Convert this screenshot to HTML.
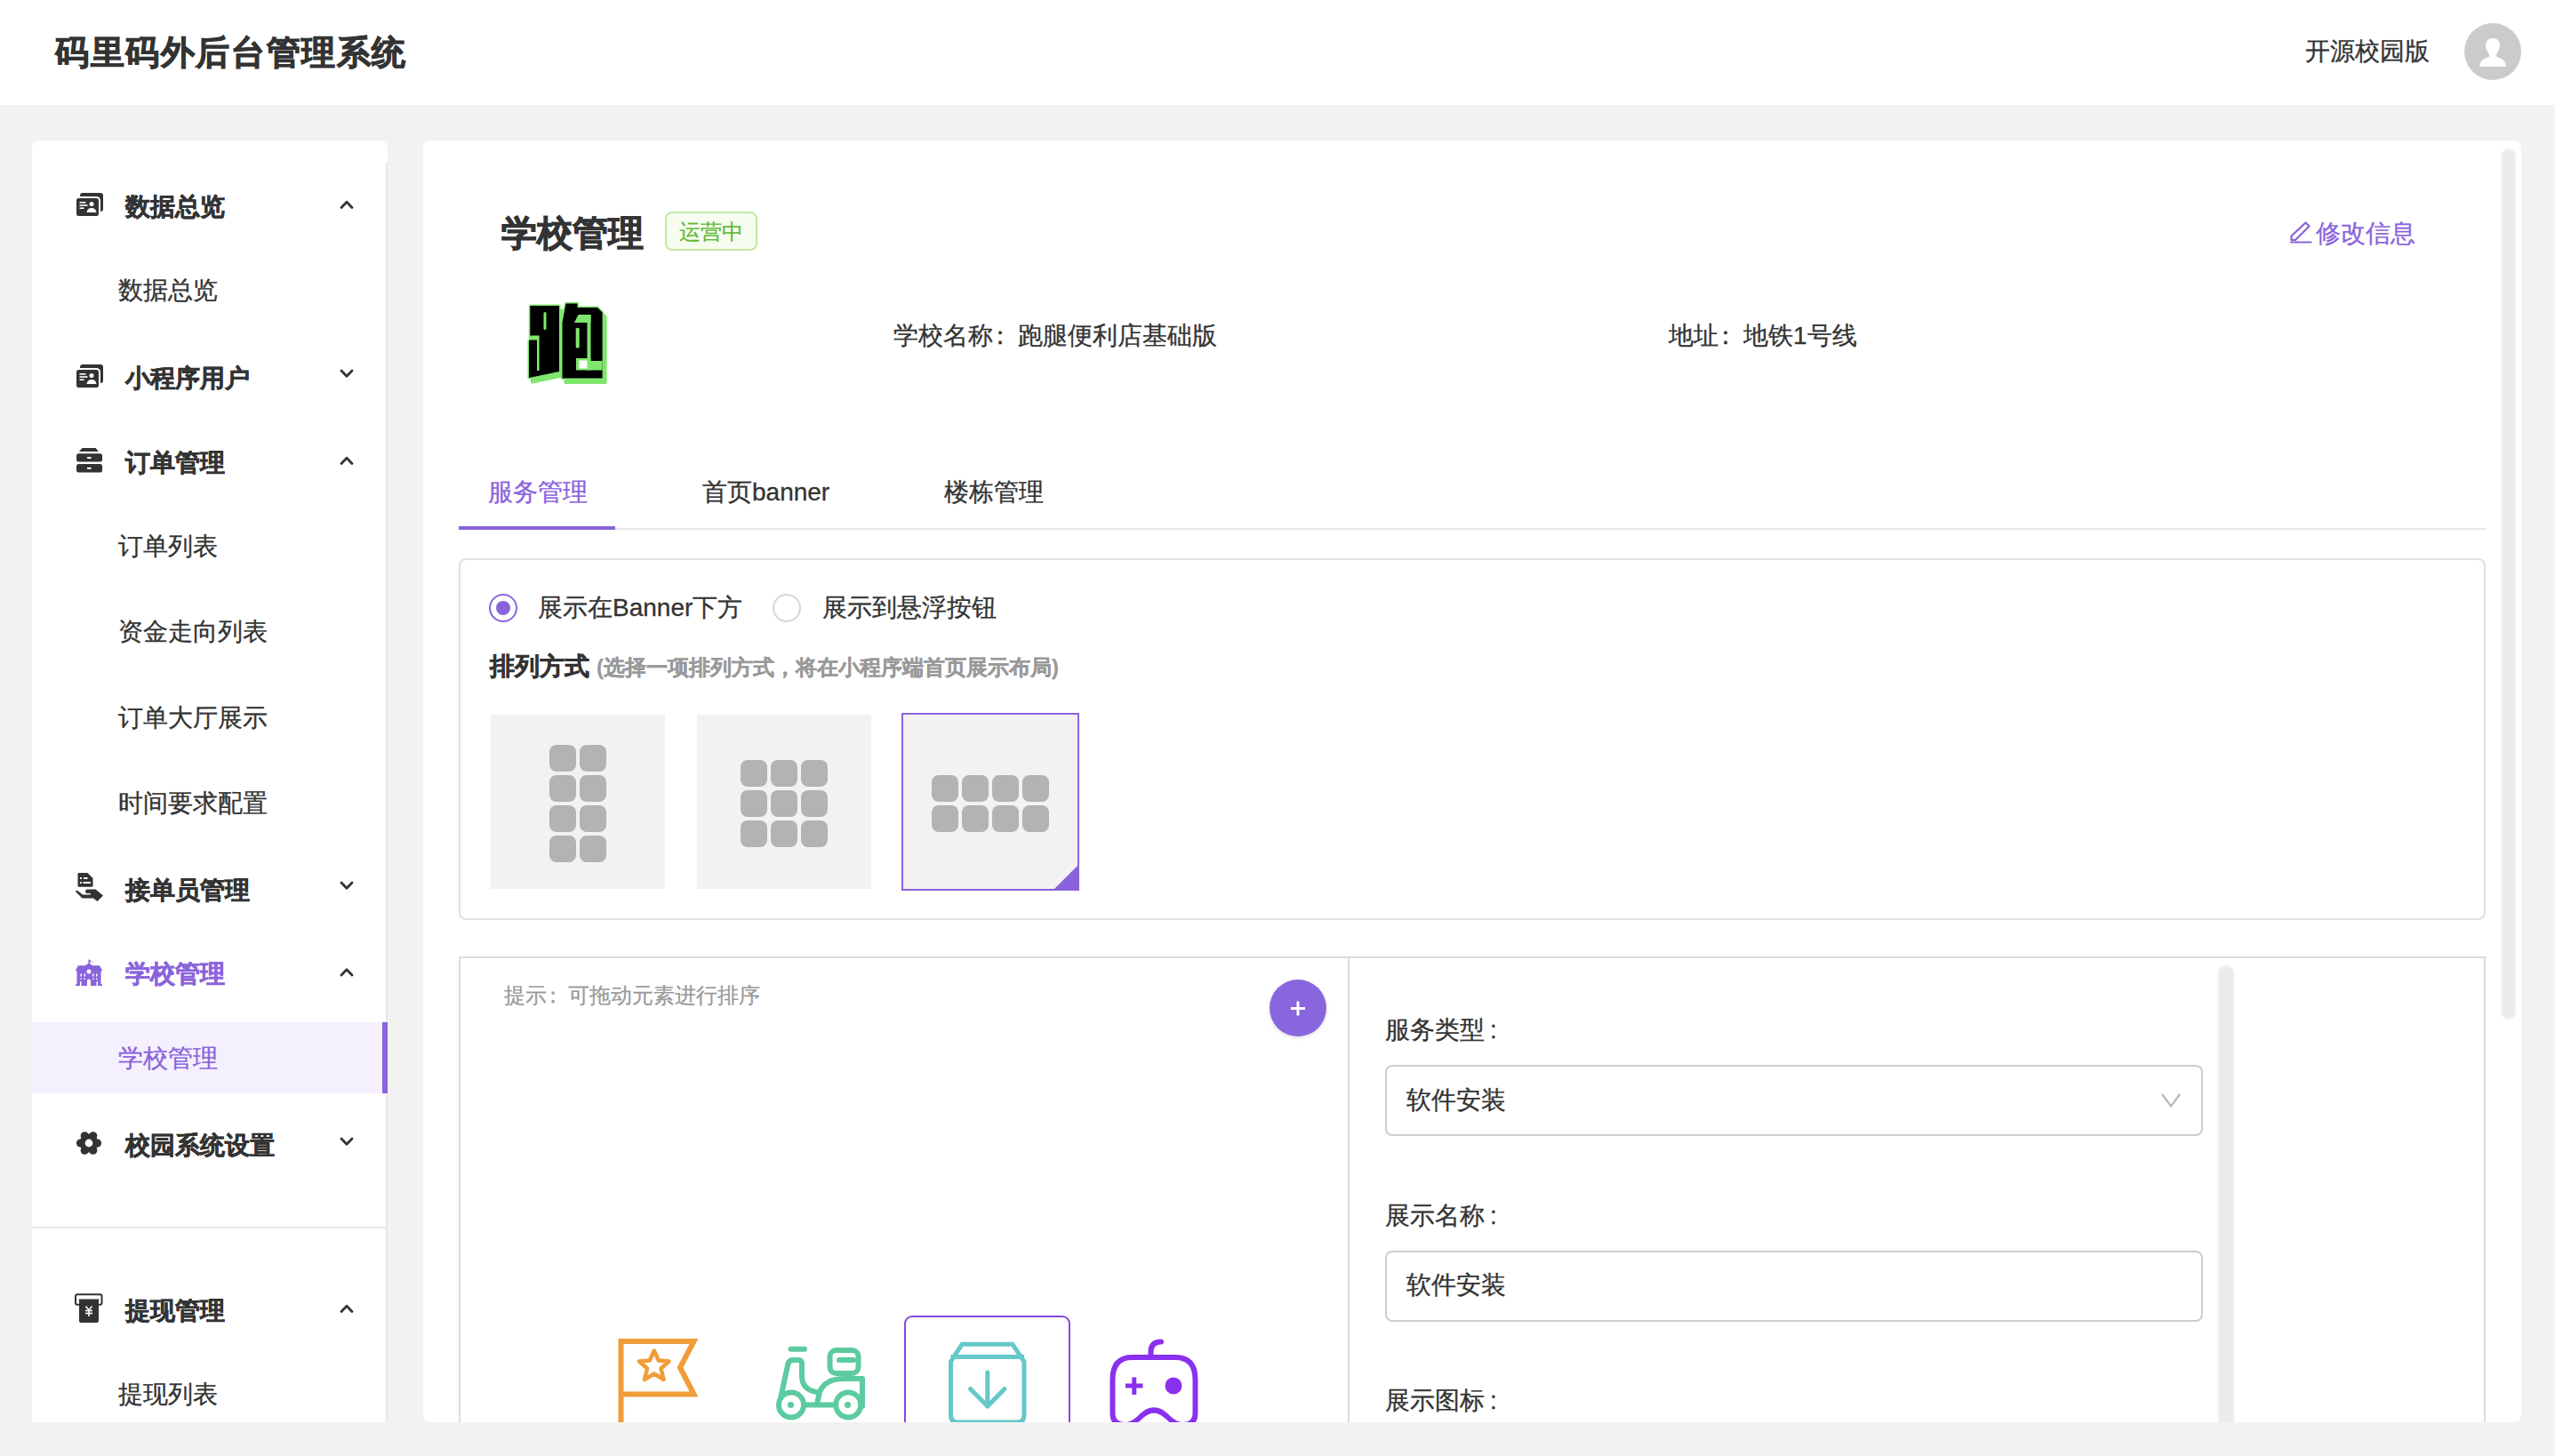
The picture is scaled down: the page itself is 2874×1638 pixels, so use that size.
<!DOCTYPE html>
<html><head><meta charset="utf-8">
<style>
*{margin:0;padding:0;box-sizing:border-box}
html,body{width:2874px;height:1638px;overflow:hidden;background:#f2f2f2;font-family:"Liberation Sans",sans-serif;color:#333}
.a{position:absolute}
.t{position:absolute;white-space:nowrap;line-height:1}
.f28{font-size:28px;-webkit-text-stroke:0.3px currentColor}
.f24{font-size:24px;-webkit-text-stroke:0.25px currentColor}
.b{font-weight:bold;-webkit-text-stroke:0.5px currentColor}
.pu{color:#8a63dc}
svg{position:absolute;overflow:visible}
</style></head><body>
<!-- header -->
<div class="a" style="left:0;top:0;width:2874px;height:118px;background:#fff"></div>
<div class="t b" style="left:62px;top:40px;font-size:38px;letter-spacing:1.6px;-webkit-text-stroke:0.9px #333">码里码外后台管理系统</div>
<div class="t f28" style="left:2593px;top:44px">开源校园版</div>
<div class="a" style="left:2772px;top:26px;width:64px;height:64px;border-radius:50%;background:#cbcbcb"></div>

<!-- sidebar -->
<div class="a" style="left:36px;top:158px;width:400px;height:1442px;background:#fff;border-radius:8px 8px 0 0"></div>
<div class="a" style="left:434px;top:182px;width:2px;height:1418px;background:#e6e8e8"></div>
<div class="a" style="left:36px;top:1150px;width:400px;height:80px;background:#f5f0fd"></div>
<div class="a" style="left:430px;top:1150px;width:6px;height:80px;background:#8a63dc"></div>
<div class="a" style="left:36px;top:1380px;width:398px;height:2px;background:#e8e8e8"></div>

<div class="t f28 b" style="left:141px;top:219px">数据总览</div>
<div class="t f28" style="left:133px;top:313px">数据总览</div>
<div class="t f28 b" style="left:141px;top:412px">小程序用户</div>
<div class="t f28 b" style="left:141px;top:507px">订单管理</div>
<div class="t f28" style="left:133px;top:601px">订单列表</div>
<div class="t f28" style="left:133px;top:697px">资金走向列表</div>
<div class="t f28" style="left:133px;top:794px">订单大厅展示</div>
<div class="t f28" style="left:133px;top:890px">时间要求配置</div>
<div class="t f28 b" style="left:141px;top:988px">接单员管理</div>
<div class="t f28 b pu" style="left:141px;top:1082px">学校管理</div>
<div class="t f28 pu" style="left:133px;top:1177px">学校管理</div>
<div class="t f28 b" style="left:141px;top:1275px">校园系统设置</div>
<div class="t f28 b" style="left:141px;top:1461px">提现管理</div>
<div class="t f28" style="left:133px;top:1555px">提现列表</div>

<!-- chevrons -->
<svg width="2874" height="1638" style="left:0;top:0" viewBox="0 0 2874 1638">
 <g fill="none" stroke="#333" stroke-width="2.8" stroke-linecap="round" stroke-linejoin="round">
  <polyline points="384,233.5 390,227.3 396,233.5"/>
  <polyline points="384,417 390,423.3 396,417"/>
  <polyline points="384,521.5 390,515.3 396,521.5"/>
  <polyline points="384,993 390,999.3 396,993"/>
  <polyline points="384,1097 390,1090.8 396,1097" stroke="#333"/>
  <polyline points="384,1281 390,1287.3 396,1281"/>
  <polyline points="384,1475.5 390,1469.3 396,1475.5"/>
 </g>
</svg>

<!-- main card -->
<div class="a" style="left:476px;top:158px;width:2360px;height:1442px;background:#fff;border-radius:8px"></div>
<div class="a" style="left:2815px;top:168px;width:14px;height:978px;background:#ebebeb;border-radius:7px;box-shadow:0 0 0 2px #f7f7f7"></div>

<div class="t b" style="left:564px;top:242px;font-size:40px;-webkit-text-stroke:0.9px #333">学校管理</div>
<div class="a" style="left:748px;top:238px;width:104px;height:44px;border:2px solid #c0e8a2;background:#f6fdf0;border-radius:8px"></div>
<div class="t f24" style="left:764px;top:249px;color:#62bb34">运营中</div>
<svg width="2874" height="1638" style="left:0;top:0" viewBox="0 0 2874 1638">
 <g fill="#80e66e" stroke="#80e66e" stroke-width="3" stroke-linejoin="round">
  <polygon points="596.3,344 629,344 629,418 595,425 595,383 596.3,383"/><polygon points="632.5,363 636.5,341.4 649.5,341.4 649.5,346 672,346 677.6,351.5 677.6,425.4 632.5,425.4"/>
  <polygon transform="translate(3.5,5)" points="596.3,344 629,344 629,418 595,425 595,383 596.3,383"/><polygon transform="translate(3.5,5)" points="632.5,363 636.5,341.4 649.5,341.4 649.5,346 672,346 677.6,351.5 677.6,425.4 632.5,425.4"/>
 </g>
 <g fill="#000">
  <polygon points="596.3,344 629,344 629,418 595,425 595,383 596.3,383"/><polygon points="632.5,363 636.5,341.4 649.5,341.4 649.5,346 672,346 677.6,351.5 677.6,425.4 632.5,425.4"/>
 </g>
 <g fill="#80e66e">
  <rect x="611.5" y="351" width="3" height="20" rx="1.5"/>
  <rect x="595" y="377.5" width="11.6" height="5"/>
  <rect x="604" y="382" width="2.6" height="35"/>
  <polygon points="646,363 650.5,354 664.5,354 664.5,363"/>
  <rect x="660.5" y="354" width="4" height="52"/>
  <rect x="647.7" y="368.7" width="4" height="22.7" rx="1.5"/>
  <rect x="648" y="403" width="16.5" height="13.5"/>
  <rect x="660.5" y="406" width="17.1" height="10.5"/>
 </g>
 <rect x="651.5" y="405.5" width="9" height="9" fill="#fff"/>
</svg>
<div class="t f28" style="left:1005px;top:364px">学校名称<span style="position:relative;left:-6px">：</span>跑腿便利店基础版</div>
<div class="t f28" style="left:1877px;top:364px">地址<span style="position:relative;left:-6px">：</span>地铁1号线</div>
<div class="t f28 pu" style="left:2605px;top:249px">修改信息</div>

<!-- tabs -->
<div class="t f28 pu" style="left:549px;top:540px">服务管理</div>
<div class="t f28" style="left:790px;top:540px">首页banner</div>
<div class="t f28" style="left:1062px;top:540px">楼栋管理</div>
<div class="a" style="left:516px;top:594px;width:2280px;height:2px;background:#e6e9e8"></div>
<div class="a" style="left:516px;top:592px;width:176px;height:4px;background:#8a63dc"></div>

<!-- panel 1 -->
<div class="a" style="left:516px;top:628px;width:2280px;height:407px;border:2px solid #e0e0e0;border-radius:8px"></div>
<div class="a" style="left:550px;top:668px;width:32px;height:32px;border:2px solid #8a63dc;border-radius:50%"></div>
<div class="a" style="left:558px;top:676px;width:16px;height:16px;background:#8a63dc;border-radius:50%"></div>
<div class="t f28" style="left:605px;top:670px">展示在Banner下方</div>
<div class="a" style="left:869px;top:668px;width:32px;height:32px;border:2px solid #d6d6d6;border-radius:50%"></div>
<div class="t f28" style="left:925px;top:670px">展示到悬浮按钮</div>
<div class="t f28 b" style="left:551px;top:736px">排列方式</div>
<div class="t f24" style="left:671px;top:739px;color:#999;font-weight:bold">(选择一项排列方式，将在小程序端首页展示布局)</div>

<div class="a" style="left:552px;top:804px;width:196px;height:196px;background:#f2f2f2"></div>
<div class="a" style="left:784px;top:804px;width:196px;height:196px;background:#f2f2f2"></div>
<div class="a" style="left:1014px;top:802px;width:200px;height:200px;background:#f2f2f2;border:2px solid #8a63dc"></div>

<!-- panel 2 -->
<div class="a" style="left:516px;top:1076px;width:2280px;height:600px;border:2px solid #dcdcdc"></div>
<div class="a" style="left:1516px;top:1076px;width:2px;height:600px;background:#dcdcdc"></div>
<div class="t f24" style="left:567px;top:1108px;color:#999">提示<span style="position:relative;left:-5px">：</span>可拖动元素进行排序</div>
<div class="a" style="left:1428px;top:1102px;width:64px;height:64px;border-radius:50%;background:#8a66de;box-shadow:0 2px 4px rgba(0,0,0,.12)"></div>
<div class="a" style="left:1017px;top:1480px;width:187px;height:200px;border:2px solid #8549e0;border-radius:9px"></div>

<div class="t f28" style="left:1558px;top:1145px">服务类型<span style="margin-left:6px">:</span></div>
<div class="a" style="left:1558px;top:1198px;width:920px;height:80px;border:2px solid #cdcdcd;border-radius:8px"></div>
<div class="t f28" style="left:1582px;top:1224px">软件安装</div>
<div class="t f28" style="left:1558px;top:1354px">展示名称<span style="margin-left:6px">:</span></div>
<div class="a" style="left:1558px;top:1407px;width:920px;height:80px;border:2px solid #cdcdcd;border-radius:8px"></div>
<div class="t f28" style="left:1582px;top:1432px">软件安装</div>
<div class="t f28" style="left:1558px;top:1562px">展示图标<span style="margin-left:6px">:</span></div>
<div class="a" style="left:2496px;top:1087px;width:16px;height:600px;background:#ebebeb;border-radius:8px;box-shadow:0 0 0 2px #f6f6f6"></div>


<!-- icons overlay -->
<svg width="2874" height="1638" style="left:0;top:0" viewBox="0 0 2874 1638">
 <!-- avatar person -->
 <path fill="#fff" d="M2804,43 C2799,43 2796,46.5 2796,51 C2796,53 2796.3,55 2797.5,57 C2798.5,59 2799.5,60 2800,61.5 L2800,63.5 C2799,64.5 2797,65 2794.5,66 C2791,67.5 2789.5,70.5 2789,75 L2819,75 C2818.5,70.5 2817,67.5 2813.5,66 C2811,65 2809,64.5 2808,63.5 L2808,61.5 C2808.5,60 2809.5,59 2810.5,57 C2811.7,55 2812,53 2812,51 C2812,46.5 2809,43 2804,43 Z"/>
 <!-- layout grids -->
 <g fill="#b3b3b3">
  <rect x="618" y="838" width="30" height="30" rx="8"/><rect x="652" y="838" width="30" height="30" rx="8"/>
  <rect x="618" y="872" width="30" height="30" rx="8"/><rect x="652" y="872" width="30" height="30" rx="8"/>
  <rect x="618" y="906" width="30" height="30" rx="8"/><rect x="652" y="906" width="30" height="30" rx="8"/>
  <rect x="618" y="940" width="30" height="30" rx="8"/><rect x="652" y="940" width="30" height="30" rx="8"/>
  <rect x="833" y="855" width="30" height="30" rx="8"/><rect x="867" y="855" width="30" height="30" rx="8"/><rect x="901" y="855" width="30" height="30" rx="8"/>
  <rect x="833" y="889" width="30" height="30" rx="8"/><rect x="867" y="889" width="30" height="30" rx="8"/><rect x="901" y="889" width="30" height="30" rx="8"/>
  <rect x="833" y="923" width="30" height="30" rx="8"/><rect x="867" y="923" width="30" height="30" rx="8"/><rect x="901" y="923" width="30" height="30" rx="8"/>
  <rect x="1048" y="872" width="30" height="30" rx="8"/><rect x="1082" y="872" width="30" height="30" rx="8"/><rect x="1116" y="872" width="30" height="30" rx="8"/><rect x="1150" y="872" width="30" height="30" rx="8"/>
  <rect x="1048" y="906" width="30" height="30" rx="8"/><rect x="1082" y="906" width="30" height="30" rx="8"/><rect x="1116" y="906" width="30" height="30" rx="8"/><rect x="1150" y="906" width="30" height="30" rx="8"/>
 </g>
 <polygon fill="#8a63dc" points="1184,1002 1214,1002 1214,972"/>
 <!-- plus -->
 <g stroke="#fff" stroke-width="3"><line x1="1452" y1="1134.5" x2="1468" y2="1134.5"/><line x1="1460" y1="1126.5" x2="1460" y2="1142.5"/></g>
 <!-- select chevron -->
 <polyline fill="none" stroke="#b8b8b8" stroke-width="2.2" points="2432,1231 2442,1244.5 2452,1231"/>
 <!-- pencil -->
 <g fill="none" stroke="#8a63dc" stroke-width="2.2" stroke-linecap="round" stroke-linejoin="round">
  <path d="M2593.5,250.5 L2597.5,254.5 L2582,270 L2577.5,270 L2577.5,265.5 Z"/>
  <line x1="2577" y1="272.5" x2="2599.5" y2="272.5"/>
 </g>
 <!-- sidebar icons -->
 <g fill="#333">
  <!-- data overview -->
  <rect x="90" y="217" width="26" height="21" rx="3"/>
  <rect x="85" y="222" width="27" height="22" rx="3.5" stroke="#fff" stroke-width="2"/>
  <g fill="#fff"><rect x="89.5" y="227" width="7" height="1.6"/><rect x="89.5" y="230.2" width="9" height="1.6"/><rect x="89.5" y="233.4" width="5" height="1.6"/>
  <circle cx="103" cy="229.5" r="2.5"/><path d="M97.5,239 C98,235.5 100,234 103,234 C106,234 108,235.5 108.5,239 Z"/></g>
  <rect x="90" y="410" width="26" height="21" rx="3"/>
  <rect x="85" y="415" width="27" height="22" rx="3.5" stroke="#fff" stroke-width="2"/>
  <g fill="#fff"><rect x="89.5" y="420" width="7" height="1.6"/><rect x="89.5" y="423.2" width="9" height="1.6"/><rect x="89.5" y="426.4" width="5" height="1.6"/>
  <circle cx="103" cy="422.5" r="2.5"/><path d="M97.5,432 C98,428.5 100,427 103,427 C106,427 108,428.5 108.5,432 Z"/></g>
  <!-- orders drawer -->
  <polygon points="92.5,504 107.5,504 111,508 89,508"/>
  <rect x="86" y="510.2" width="29" height="9.4" rx="2.5"/>
  <rect x="86" y="522" width="29" height="9.4" rx="2.5"/>
  <g fill="#fff"><rect x="98" y="514" width="4.6" height="2"/><rect x="98" y="525.8" width="4.6" height="2"/></g>
  <!-- courier hand -->
  <path d="M88.5,982 L98.5,982 L104.5,988 L104.5,996.5 Q104.5,997.8 103.2,997.8 L88.8,997.8 Q87.5,997.8 87.5,996.5 L87.5,983 Q87.5,982 88.5,982 Z"/>
  <g fill="#fff"><rect x="90" y="987" width="2" height="2"/><rect x="94" y="987" width="4.5" height="2"/><rect x="90" y="992" width="2" height="2"/><rect x="93.5" y="992" width="8.5" height="2"/></g>
  <path d="M85,1003 Q86,1001 88,1002.5 L93,1006.5 L100.5,1006.5 Q102.5,1006.5 102,1005 L97.5,1005 Q96,1004.5 96,1002.5 Q96.5,1000.5 98,1000.5 L107.5,1000.5 L116,1007.5 L109.5,1014 L105,1010.5 L92.5,1010.5 Z"/>
  <!-- gear -->
  <circle cx="100" cy="1286" r="10.5"/>
  <circle cx="95.25" cy="1277.8" r="4.6"/><circle cx="104.75" cy="1277.8" r="4.6"/>
  <circle cx="109.5" cy="1286" r="4.6"/><circle cx="90.5" cy="1286" r="4.6"/>
  <circle cx="95.25" cy="1294.2" r="4.6"/><circle cx="104.75" cy="1294.2" r="4.6"/>
  <circle cx="100" cy="1286" r="4.4" fill="#fff"/>
  <!-- withdraw -->
  <rect x="85" y="1456.3" width="29.5" height="11.5" rx="2" fill="none" stroke="#333" stroke-width="2"/>
  <path d="M88.5,1461.5 L111.5,1461.5 L111,1463 L111,1486 Q111,1488 109,1488 L91,1488 Q89,1488 89,1486 L89,1463 Z"/>
  <g stroke="#fff" stroke-width="1.6" fill="none"><polyline points="96.5,1469.5 100,1474 103.5,1469.5"/><line x1="96" y1="1474.5" x2="104" y2="1474.5"/><line x1="96" y1="1477.5" x2="104" y2="1477.5"/><line x1="100" y1="1474" x2="100" y2="1481"/></g>
 </g>
 <!-- school purple -->
 <g fill="#8a63dc">
  <path fill-rule="evenodd" d="M99.5,1079.5 L100.5,1079.5 L105,1083 L106,1082.5 L101,1081.8 L101,1084 L104,1086.2 L112,1086.2 L115,1091.5 L113.5,1093 L113.5,1107 L115,1107.5 L115,1109 L110,1109 L110,1104.5 Q109,1103 108.5,1104.5 L108.5,1109 L102,1109 L102,1103.5 Q102,1101.5 100,1101.5 Q98,1101.5 98,1103.5 L98,1109 L91.5,1109 L91.5,1104.5 Q91,1103 90,1104.5 L90,1109 L85,1109 L85,1107.5 L86.5,1107 L86.5,1093 L85,1091.5 L88,1086.2 L96,1086.2 L99.5,1083.5 Z M100,1090.5 A2.5,2.5 0 1 0 100,1095.5 A2.5,2.5 0 1 0 100,1090.5 Z M90.5,1095.5 h1.5 v3 h-1.5 Z M94.5,1095.5 h1.5 v3 h-1.5 Z M104,1095.5 h1.5 v3 h-1.5 Z M108,1095.5 h1.5 v3 h-1.5 Z M90.5,1100.5 h1.5 v1.5 h-1.5 Z M94.5,1100.5 h1.5 v1.5 h-1.5 Z M104,1100.5 h1.5 v1.5 h-1.5 Z M108,1100.5 h1.5 v1.5 h-1.5 Z"/>
 </g>
 <!-- bottom service icons -->
 <g fill="none" stroke-width="6" stroke-linejoin="round" stroke-linecap="round">
  <!-- flag orange -->
  <g stroke="#f09c38">
   <line x1="698.5" y1="1506" x2="698.5" y2="1610" stroke-linecap="butt"/>
   <polyline stroke-linejoin="miter" stroke-linecap="butt" points="698.5,1509 780.5,1509 765,1538.5 780.5,1568.5 698.5,1568.5"/>
   <polygon stroke-width="4.5" points="735.8,1519.5 740.8,1530.5 752.5,1531.5 743.5,1539.5 746.5,1552 735.8,1545.5 725,1552 728,1539.5 719,1531.5 730.8,1530.5"/>
  </g>
  <!-- scooter green -->
  <g stroke="#5ccb9f">
   <line x1="889.5" y1="1517.7" x2="905" y2="1517.7"/>
   <rect x="933.5" y="1519" width="32" height="26" rx="7"/>
   <line x1="944" y1="1530" x2="960" y2="1530"/>
   <path d="M878,1573 L886.5,1534 Q888,1530 892,1530 L898,1530 Q902,1530 902,1535 L902,1548 Q902,1563 918,1566"/>
   <path d="M919,1579 L922,1566 Q928,1551 950,1551 L970,1551 L970,1582"/>
   <line x1="907" y1="1580.4" x2="937" y2="1580.4"/>
   <circle cx="890" cy="1580.4" r="14"/>
   <circle cx="954.2" cy="1580.4" r="14"/>
  </g>
  <g fill="#5ccb9f"><circle cx="889.5" cy="1580.5" r="3.6"/><circle cx="953.5" cy="1580.5" r="3.6"/></g>
  <!-- box teal -->
  <g stroke="#66c8c8" stroke-width="5">
   <path d="M1069.5,1532 L1082,1512.3 L1139,1512.3 L1152,1532 L1152,1592 Q1152,1600 1144,1600 L1077.5,1600 Q1069.5,1600 1069.5,1592 Z"/>
   <line x1="1069.5" y1="1526.5" x2="1152" y2="1526.5" stroke-linecap="butt"/>
   <line x1="1110.8" y1="1544" x2="1110.8" y2="1582"/>
   <polyline points="1091.5,1562.5 1110.8,1582 1130,1562.5"/>
  </g>
  <!-- gamepad purple -->
  <g stroke="#8a30ee">
   <path d="M1294.5,1527 L1294.5,1521 Q1294.5,1509.5 1306,1509.5"/>
   <path d="M1274,1527 L1322,1527 Q1344.5,1527 1344.5,1552 L1344.5,1590 Q1344.5,1603 1330,1603 Q1322,1603 1312,1593 Q1298,1580 1284,1593 Q1274,1603 1266,1603 Q1251.5,1603 1251.5,1590 L1251.5,1552 Q1251.5,1527 1274,1527 Z"/>
   <line x1="1266" y1="1559" x2="1285.5" y2="1559" stroke-width="5" stroke-linecap="butt"/>
   <line x1="1275.8" y1="1549.5" x2="1275.8" y2="1569" stroke-width="5" stroke-linecap="butt"/>
  </g>
  <circle cx="1320" cy="1559" r="9.5" fill="#8a30ee" stroke="none"/>
 </g>
</svg>
<!-- bottom gray strip clip -->
<div class="a" style="left:0;top:1600px;width:2874px;height:38px;background:#f2f2f2"></div>
</body></html>
